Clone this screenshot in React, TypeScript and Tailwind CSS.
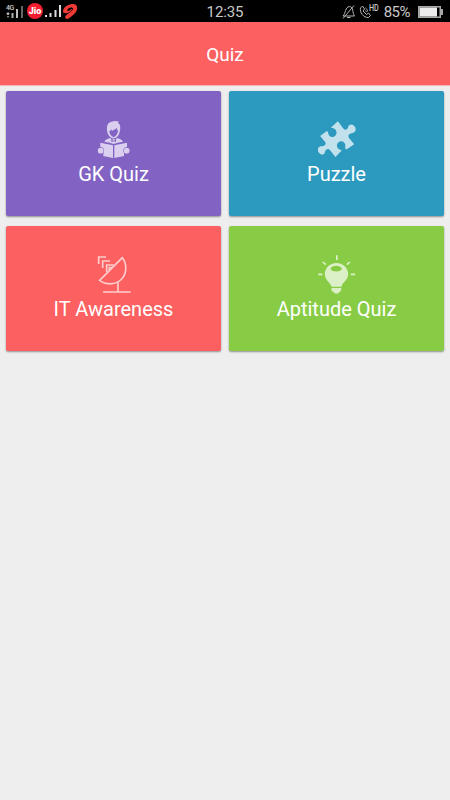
import type { ReactNode } from "react";

type QuizCardProps = {
  title: string;
  color: string;
  icon: ReactNode;
};

function ReaderIcon() {
  return (
    <svg className="h-10 w-10" viewBox="12 15 120 120" fill="#dacfee">
      <path d="M52 50C48 34 53 22 65 20L73 18L79 19L86 18L84 23C92 29 92 40 89 50C87 62 79 70 71 70C63 70 54 62 52 50Z" />
      <path d="M58 49L66 43L65 48L76 43L79 38L84 48C82 59 76 66 71 66C66 66 59 59 58 49Z" fill="#8263c3" />
      <path d="M43 80C46 73 54 71 61 69L65 75L71 72L77 75L81 69C88 71 96 73 99 80L83 83L71 87L59 83Z" />
      <path d="M64 74L71 77L78 74V81L71 79L64 81Z" fill="#8263c3" />
      <path d="M31 83L69 91V129L40 123V112H31Z" />
      <path d="M111 83L73 91V129L102 123V112H111Z" />
      <circle cx="31" cy="107" r="11" fill="#8263c3" />
      <circle cx="111" cy="107" r="11" fill="#8263c3" />
      <circle cx="32" cy="107" r="8.500" />
      <circle cx="110" cy="107" r="8.500" />
    </svg>
  );
}

function PuzzleIcon() {
  return (
    <svg className="h-10 w-10" viewBox="19.5 15 120 120" fill="#c1e2ed">
      <path d="M82 19L99 41Q104 47 110 42C114 39 112 34 116 31C123 25 129 30 132 34C137 39 137 47 132 51C127 55 122 53 116 58Q111 62 115 68L131 88L110 102Q105 104 104 98C107 87 101 80 93 79C84 79 77 87 80 96C82 103 88 103 94 106L75 126L58 105Q53 99 47 104C42 109 44 113 41 116C36 121 29 118 26 114C21 108 21 98 27 95C32 93 37 96 43 91Q48 87 44 81L29 63L48 49Q53 48 53 54C54 62 60 67 67 66C76 64 80 56 77 47C75 41 69 39 61 38Z" />
    </svg>
  );
}

function DishIcon() {
  return (
    <svg className="h-10 w-10" viewBox="12 20 120 120" fill="none" stroke="#ffcdcd" strokeWidth="5">
      <path d="M26 47V26H48M38 59V38H60M50 71V50H71M58 65V58H66" />
      <path d="M97 28L29 96C46 109 74 111 92 95C110 79 113 49 97 28Z" />
      <path d="M84 101V129M39 131H122" />
    </svg>
  );
}

function BulbIcon() {
  return (
    <svg className="h-10 w-10" viewBox="20.5 20 120 120" fill="#dcf0c7">
      <path d="M79 44C59 44 44 59 44 78C44 96 60 101 64 115H94C97 101 114 96 114 78C114 59 99 44 79 44Z" />
      <path d="M64 119H93V126Q92 130 88 131Q84 136 79 136Q73 136 70 131Q65 130 64 126Z" />
      <ellipse cx="78" cy="61" rx="17" ry="8.500" fill="#88cc45" />
      <path
        d="M80 21V35M38 41L47 49M119 41L110 49M24 78H37M122 78H135"
        stroke="#dcf0c7"
        strokeWidth="5"
      />
    </svg>
  );
}

function StatusBar() {
  return (
    <div className="grid h-[22px] grid-cols-[1fr_auto_1fr] items-center bg-black px-1.5 text-[#c9c9c9]">
      <div className="flex items-center">
        <div className="flex h-[13px] w-[17px] items-end">
          <div className="flex w-2 flex-col items-start">
            <span className="text-[7px] leading-[7px] font-medium tracking-[-0.5px]">4G</span>
            <svg className="h-[6px] w-[8px]" viewBox="0 0 8 6" fill="#b0b0b0">
              <path d="M0 2L2 0L4 2H3V3H1V2zM1 4H3L2 6zM5.500 1h2v5h-2z" />
            </svg>
          </div>
          <span className="ml-[1.5px] h-[9px] w-[2px] shrink-0 bg-[#bdbdbd]" />
          <span className="ml-[3px] h-3 w-[2px] shrink-0 bg-[#666]" />
        </div>
        <div className="ml-1 flex h-4 w-4 items-center justify-center rounded-full bg-[#f51d30] pt-px text-[9px] leading-none font-black text-white">
          Jio
        </div>
        <svg className="ml-[2px] h-3 w-[17px]" viewBox="0 0 17 12" fill="#dedede">
          <path d="M0 10h2v2H0zM4.500 8h2v4h-2zM9.500 5h2v7h-2zM14 0h2v12h-2z" />
        </svg>
        <svg className="ml-px h-[15px] w-[15px]" viewBox="0 0 15 15" fill="#f03a36">
          <path d="M0 7C1 2 6 0 10 0C15 0 15 5 13 8C11 11 7 13 5 15C3 15 2 14 2 13C3 10 9 8 10 5C10 3 7 3 5 5C4 6 4 7 5 7C6 7 7 6 8 5L9 5C8 8 4 10 2 9C0 9 0 8 0 7Z" />
        </svg>
      </div>
      <span className="mt-[2px] text-[15px] leading-5 tracking-[-0.1px]">12:35</span>
      <div className="flex items-center justify-end">
        <svg className="mt-px h-[14px] w-[13px]" viewBox="0 0 13 14" fill="none" stroke="#b4b4b4" strokeWidth="1">
          <path d="M1 11C4 8 3 2 7.500 1.500C12 2 10 8 12.500 11ZM5 12.500H8.500M12 .5L1 13.500" />
        </svg>
        <div className="ml-1 flex h-4 w-[19px]">
          <svg className="mt-[2px] h-[13px] w-3 shrink-0" viewBox="0 0 11 13" fill="none" stroke="#b4b4b4">
            <path d="M1 3L3 1L5 4L3.500 6L7 9.500L9 8L11 10.500L9 12.500C4 13 0 7 1 3ZM6 3C7.500 4 8 5 8 6.500M6 5.500L7 7" />
          </svg>
          <span className="-ml-[2px] origin-left scale-x-[0.8] text-[9px] leading-[10px] font-medium">HD</span>
        </div>
        <span className="mt-[2px] ml-[6px] text-[15px] leading-5 tracking-[-0.5px]">85%</span>
        <svg className="mt-px ml-[8px] h-3 w-[26px]" viewBox="0 0 26 12">
          <path d="M.75.75H22.250V11.250H.75Z" fill="none" stroke="#a8a8a8" strokeWidth="1.500" />
          <path d="M1.500 1.500H19V10.500H1.500Z" fill="#ececec" />
          <path d="M23 3H25V9H23Z" fill="#a8a8a8" />
        </svg>
      </div>
    </div>
  );
}

function QuizCard({ title, color, icon }: QuizCardProps) {
  return (
    <button
      className={`flex h-[125px] flex-col items-center rounded-[2px] pt-[29px] text-white shadow-[0_1px_2px_rgba(0,0,0,0.4)] ${color}`}
    >
      {icon}
      <span className="text-xl leading-7">{title}</span>
    </button>
  );
}

export default function App() {
  return (
    <div className="min-h-screen bg-[#eeeeee] font-['Roboto',sans-serif]">
      <StatusBar />
      <header className="flex h-[63px] items-center justify-center bg-[#fc6060] pt-0.5 text-white shadow-[0_1px_0_#f6b4b4]">
        <h1 className="text-[19px] leading-6">Quiz</h1>
      </header>
      <main className="grid grid-cols-2 gap-x-2 gap-y-2.5 px-1.5 pt-1.5">
        <QuizCard title="GK Quiz" color="bg-[#8263c3]" icon={<ReaderIcon />} />
        <QuizCard title="Puzzle" color="bg-[#2c9abf]" icon={<PuzzleIcon />} />
        <QuizCard title="IT Awareness" color="bg-[#fc6060]" icon={<DishIcon />} />
        <QuizCard title="Aptitude Quiz" color="bg-[#88cc45]" icon={<BulbIcon />} />
      </main>
    </div>
  );
}
